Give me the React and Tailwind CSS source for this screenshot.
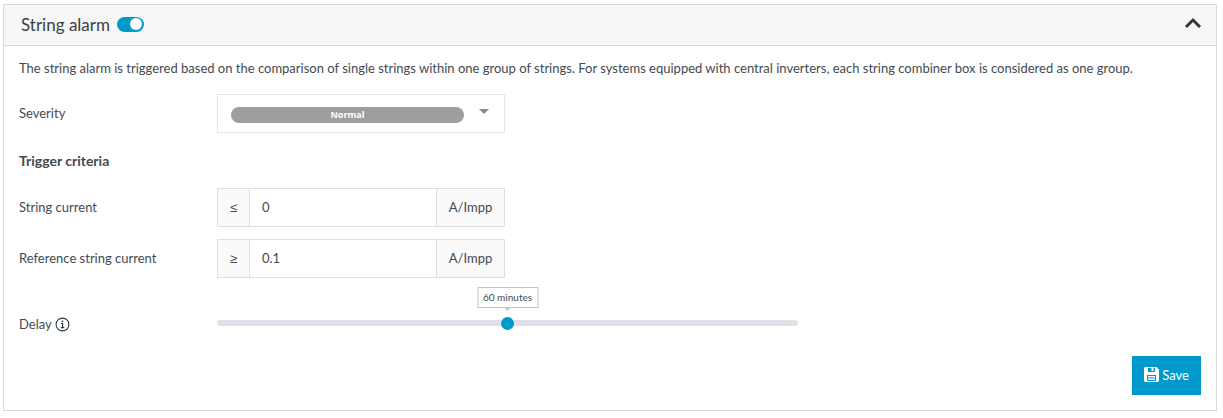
import React, { useState } from 'react'

const MAX_DELAY = 120

export default function App() {
  const [enabled, setEnabled] = useState(true)
  const [open, setOpen] = useState(true)

  return (
    <main className="pt-1 pr-[6px] pb-1 pl-[3px] font-['Lato','Noto_Sans',sans-serif] text-[13px] leading-5 text-[#444a50]">
      <section className="border border-[#d9d9d9] bg-white">
        <header className="flex h-[41px] items-center justify-between border-b border-[#d9d9d9] bg-[#f6f6f6] pr-[14px] pl-[17px]">
          <div className="flex items-center gap-[7px]">
            <label htmlFor="alarm-enabled" className="text-[17px] leading-6 text-[#3c4043]">String alarm</label>
            <input
              id="alarm-enabled"
              type="checkbox"
              role="switch"
              checked={enabled}
              onChange={e => setEnabled(e.target.checked)}
              className="mb-0.5 flex h-[15px] w-[27px] appearance-none items-center rounded-full bg-gray-400 px-[2px] before:size-3 before:rounded-full before:bg-white checked:justify-end checked:bg-[#0099cc]"
            />
          </div>
          <button type="button" aria-label="Toggle section" aria-expanded={open} onClick={() => setOpen(!open)} className="pb-1">
            <svg width="18" height="12" viewBox="0 0 18 12" fill="none" className={open ? '' : 'rotate-180'} aria-hidden="true">
              <path d="M2 10 L9 3 L16 10" stroke="#33373b" strokeWidth="3" />
            </svg>
          </button>
        </header>

        {open && <AlarmForm />}
      </section>
    </main>
  )
}

function AlarmForm() {
  return (
    <form className="px-[15px] pt-3 pb-[15px]" onSubmit={e => e.preventDefault()}>
      <p>
        The string alarm is triggered based on the comparison of single strings within one group of strings. For systems equipped with central inverters, each string combiner box is considered as one group.
      </p>

      <Row label="Severity" id="severity" className="mt-4">
        <div className="flex h-[39px] w-72 items-center gap-[15px] border border-[#e5e5e5] pl-[13px]">
          <select
            id="severity"
            defaultValue="Normal"
            className="mt-[3px] h-4 w-[233px] appearance-none rounded-full bg-[#9e9e9e] text-center font-['Open_Sans',sans-serif] text-[9px] leading-4 font-bold text-white [text-align-last:center]"
          >
            <option>Low</option>
            <option>Normal</option>
            <option>High</option>
          </select>
          <svg width="10" height="5" viewBox="0 0 10 5" className="mb-1" aria-hidden="true">
            <path d="M0 0 H10 L5 5 Z" fill="#8c8c8c" />
          </svg>
        </div>
      </Row>

      <h2 className="mt-[18px] text-sm leading-5 font-bold">Trigger criteria</h2>

      <Row label="String current" id="string-current" className="mt-[17px]">
        <LimitInput id="string-current" sign="≤" value="0" />
      </Row>
      <Row label="Reference string current" id="reference-current" className="mt-3">
        <LimitInput id="reference-current" sign="≥" value="0.1" />
      </Row>

      <DelayRow />

      <div className="mt-[22px] flex justify-end">
        <button type="submit" className="flex h-[39px] items-center gap-[3px] bg-[#0099cc] px-3 pb-0.5 text-white">
          <SaveIcon />
          Save
        </button>
      </div>
    </form>
  )
}

function Row({ label, id, className, children }) {
  return (
    <div className={`flex items-center ${className}`}>
      <label htmlFor={id} className="w-[198px] shrink-0 pb-0.5">{label}</label>
      {children}
    </div>
  )
}

function LimitInput({ id, sign, value }) {
  return (
    <div className="flex h-[39px] w-72 border border-[#e0e0e0]">
      <span className="flex w-8 items-center justify-center border-r border-[#e0e0e0] bg-[#fafafa] pb-0.5 font-['Noto_Sans',sans-serif]">{sign}</span>
      <input id={id} type="text" defaultValue={value} className="min-w-0 flex-1 px-3 pb-0.5 outline-none" />
      <span className="flex w-[68px] items-center justify-center border-l border-[#e0e0e0] bg-[#fafafa] pb-0.5">A/Impp</span>
    </div>
  )
}

function DelayRow() {
  const [delay, setDelay] = useState(60)

  return (
    <div className="mt-9 flex items-center">
      <label htmlFor="delay" className="flex w-[198px] shrink-0 items-center gap-[3px]">
        Delay
        <InfoIcon />
      </label>
      <div className="relative mb-0.5 flex max-w-[581px] flex-1 items-center">
        <input
          id="delay"
          type="range"
          min="0"
          max={MAX_DELAY}
          value={delay}
          onChange={e => setDelay(Number(e.target.value))}
          className="h-[6px] w-full appearance-none rounded-full bg-[#e0e0e7] [&::-webkit-slider-thumb]:size-[13px] [&::-webkit-slider-thumb]:appearance-none [&::-webkit-slider-thumb]:rounded-full [&::-webkit-slider-thumb]:bg-[#0099cc]"
        />
        {/* value bubble, follows the thumb */}
        <output
          htmlFor="delay"
          style={{ left: `${(delay / MAX_DELAY) * 100}%` }}
          className="absolute bottom-[18px] -translate-x-1/2 border border-[#c4c4c8] bg-white px-[5px] text-[10px] leading-[19px] whitespace-nowrap after:absolute after:top-full after:left-1/2 after:-translate-x-1/2 after:border-4 after:border-transparent after:border-t-[#c8c8d0]"
        >
          {delay} minutes
        </output>
      </div>
    </div>
  )
}

function InfoIcon() {
  return (
    <svg width="15" height="15" viewBox="0 0 15 15" fill="none" aria-hidden="true">
      <circle cx="7.5" cy="7.5" r="6.4" stroke="#33373b" strokeWidth="1.1" />
      <path d="M6 6.5 H7.6 V10.7 M5.8 10.7 H9.3" stroke="#33373b" strokeWidth="1.2" />
      <circle cx="7.5" cy="4.3" r="0.9" fill="#33373b" />
    </svg>
  )
}

function SaveIcon() {
  return (
    <svg width="15" height="15" viewBox="0 0 15 15" aria-hidden="true">
      <path
        fill="currentColor"
        fillRule="evenodd"
        d="M1 0 H12.5 L15 2.5 V14 L14 15 H1 L0 14 V1 Z M4 1 V5 H11 V1 H9.5 V4 H7.5 V1 Z M3 8 V14 H12 V8 Z"
      />
      <path d="M4 9.7 H11 M4 12.3 H11" stroke="currentColor" strokeWidth="1.6" />
    </svg>
  )
}
